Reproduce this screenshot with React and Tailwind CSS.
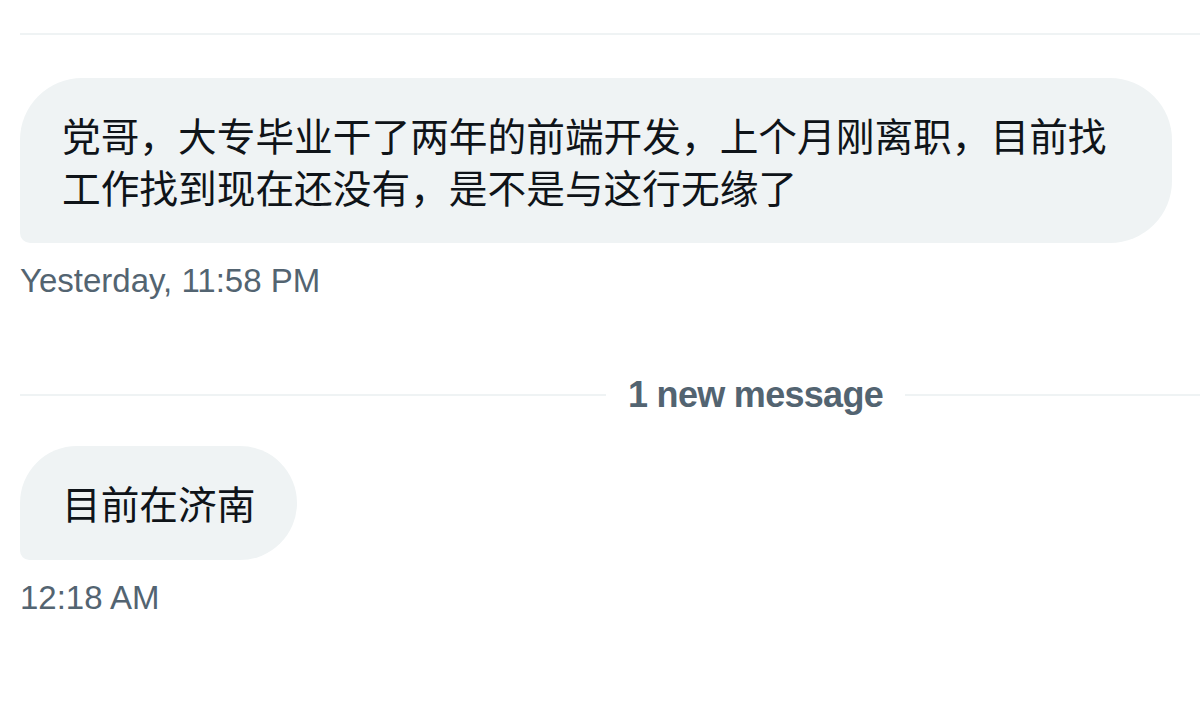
import React from 'react';

const CJK = { fontFamily: '"Noto Sans CJK SC", "Noto Sans", sans-serif' };

function Bubble({ children, className = '' }) {
    return (
        <div
            className={`bg-[#eff3f4] text-[#0f1419] rounded-[62px] rounded-bl-[10px] px-[42px] py-[31px] text-[38.7px] leading-[51.6px] ${className}`}
            style={CJK}
        >
            {children}
        </div>
    );
}

function Timestamp({ children }) {
    return (
        <div className="mt-[17px] text-[33px] leading-[41px] tracking-[0px] text-[#536471] font-['Liberation_Sans',Arial,sans-serif]">
            {children}
        </div>
    );
}

export default function App() {
    return (
        <div className="w-[1200px] h-[707px] bg-white overflow-hidden pl-[20px] pt-[33px]">
            {/* end of previous section */}
            <div className="h-[2px] bg-[#eff3f4]" />

            <Bubble className="mt-[43px] w-[1152px]">
                党哥，大专毕业干了两年的前端开发，上个月刚离职，目前找工作找到现在还没有，是不是与这行无缘了
            </Bubble>
            <Timestamp>Yesterday, 11:58 PM</Timestamp>

            {/* unread divider */}
            <div className="mt-[72px] flex items-center">
                <div className="w-[586px] h-[2px] bg-[#eff3f4]" />
                <span className="px-[22px] text-[36px] leading-[44px] font-bold tracking-[-0.7px] text-[#536471] font-['Liberation_Sans',Arial,sans-serif]">
                    1 new message
                </span>
                <div className="flex-1 h-[2px] bg-[#eff3f4]" />
            </div>

            <Bubble className="mt-[29px] w-fit">目前在济南</Bubble>
            <Timestamp>12:18 AM</Timestamp>
        </div>
    );
}
